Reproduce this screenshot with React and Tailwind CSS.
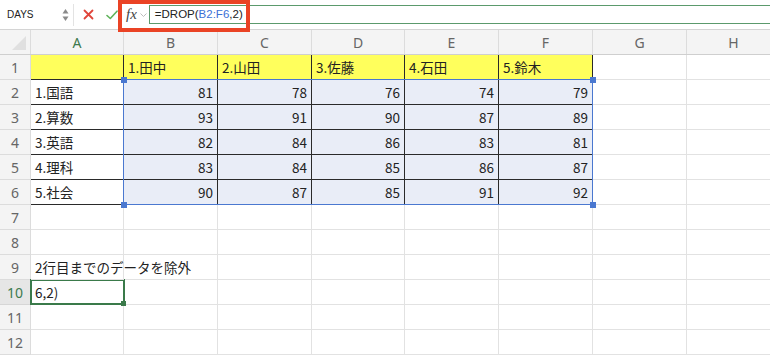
import React from "react";

const W = ["w-[93px]", "w-[94px]", "w-[94px]", "w-[93px]", "w-[94px]", "w-[94px]", "w-[94px]", "w-[94px]"];
const LETTERS = ["A", "B", "C", "D", "E", "F", "G", "H"];

const DATA = [
  ["", "1.田中", "2.山田", "3.佐藤", "4.石田", "5.鈴木"],
  ["1.国語", 81, 78, 76, 74, 79],
  ["2.算数", 93, 91, 90, 87, 89],
  ["3.英語", 82, 84, 86, 83, 81],
  ["4.理科", 83, 84, 85, 86, 87],
  ["5.社会", 90, 87, 85, 91, 92],
];

const font = { fontFamily: '"Noto Sans CJK JP", "Noto Sans", sans-serif' };

function Cell({ r, c }) {
  const inTable = r <= 6 && c <= 5;
  let content = null;
  let bg = "bg-white";
  let align = "justify-start pl-[4px]";
  if (inTable) {
    const v = DATA[r - 1][c];
    content = v;
    if (r === 1) bg = "bg-[#ffff5c]";
    else if (c >= 1) {
      bg = "bg-[#e9edf7]";
      align = "justify-end pr-[4px]";
    }
  }
  if (r === 9 && c === 0) content = "2行目までのデータを除外";
  if (r === 10 && c === 0) content = "6,2)";
  const border = inTable
    ? "border-r border-b border-[#2a2a2a]"
    : "border-r border-b border-[#e2e2e2]";
  return (
    <div
      className={`${W[c]} h-[25px] shrink-0 flex items-center ${align} ${bg} ${border} text-[13.5px] text-[#222] whitespace-nowrap ${r === 9 && c === 0 ? "overflow-visible relative z-10" : "overflow-hidden"}`}
    >
      {content}
    </div>
  );
}

export default function App() {
  return (
    <div className="w-[770px] h-[355px] overflow-hidden bg-white relative" style={font}>
      {/* formula bar */}
      <div className="h-[30px] flex items-center bg-white border-b border-[#d4d4d4] relative">
        <div className="w-[74px] h-[22px] flex items-center pl-[7px] pr-[4px] border-r border-[#e3e3e3]">
          <span className="text-[10px] text-[#222] flex-1" style={{ fontFamily: '"Liberation Sans", Arial, sans-serif' }}>DAYS</span>
          <svg width="7" height="14" viewBox="0 0 7 14">
            <path d="M3.5 1 L6.5 5.5 L0.5 5.5 Z" fill="#8a8a8a" />
            <path d="M3.5 13 L6.5 8.5 L0.5 8.5 Z" fill="#8a8a8a" />
          </svg>
        </div>
        <div className="w-[24px] flex justify-center ml-[2px]">
          <svg width="11" height="11" viewBox="0 0 11 11">
            <path d="M1.5 1.5 L9.5 9.5 M9.5 1.5 L1.5 9.5" stroke="#e0443a" strokeWidth="1.8" strokeLinecap="round" />
          </svg>
        </div>
        <div className="w-[24px] flex justify-center">
          <svg width="12" height="10" viewBox="0 0 12 10">
            <path d="M1 5.5 L4.3 8.5 L11 1.2" stroke="#5fb35a" strokeWidth="1.6" fill="none" strokeLinecap="round" strokeLinejoin="round" />
          </svg>
        </div>
        <span
          className="italic text-[15px] text-[#444] ml-[2px]"
          style={{ fontFamily: '"Liberation Serif", "DejaVu Serif", serif' }}
        >
          fx
        </span>
        <svg width="9" height="8" viewBox="0 0 9 8" className="ml-[2px]">
          <path d="M1.5 2.5 L4.5 5.5 L7.5 2.5" stroke="#bdbdbd" strokeWidth="1" fill="none" />
        </svg>
        <div className="flex-1 h-[19px] ml-[1px] border border-[#5b9a6c] border-r-0 flex items-center pl-[5px]">
          <span className="text-[11.5px] text-[#222]" style={{ fontFamily: '"Liberation Sans", Arial, sans-serif' }}>
            =DROP(<span className="text-[#3b6fd6]">B2:F6</span>,2)
          </span>
        </div>
        {/* red annotation box */}
        <div className="absolute left-[118px] top-0 w-[132px] h-[32px] border-[4px] border-[#ea4325] z-20" />
      </div>

      {/* column header */}
      <div className="flex h-[25px] bg-[#f4f4f4] border-b border-[#cfcfcf]">
        <div className="w-[31px] shrink-0 border-r border-[#dcdcdc] relative">
          <svg width="22" height="18" viewBox="0 0 22 18" className="absolute right-[2px] bottom-[2px]">
            <path d="M20 2 L20 16 L6 16 Z" fill="#e0e0e0" />
          </svg>
        </div>
        {LETTERS.map((l, i) => (
          <div
            key={l}
            className={`${W[i]} shrink-0 flex items-center justify-center border-r border-[#dcdcdc] text-[14px] ${i === 0 ? "text-[#3d7a4e]" : "text-[#666]"}`}
            style={{ fontFamily: '"Noto Sans", sans-serif' }}
          >
            {l}
          </div>
        ))}
      </div>

      {/* rows */}
      <div className="relative">
        {Array.from({ length: 12 }, (_, ri) => {
          const r = ri + 1;
          return (
            <div key={r} className="flex">
              <div
                className={`w-[31px] h-[25px] shrink-0 flex items-center justify-center border-r border-b text-[14px] ${r === 10 ? "bg-[#e6e6e6] text-[#3d7a4e] border-[#d6d6d6]" : "bg-[#f4f4f4] text-[#666] border-[#dcdcdc]"}`}
                style={{ fontFamily: '"Noto Sans", sans-serif' }}
              >
                {r}
              </div>
              {LETTERS.map((_, c) => (
                <Cell key={c} r={r} c={c} />
              ))}
            </div>
          );
        })}

        {/* selection B2:F6 */}
        <div className="absolute left-[123px] top-[24px] w-[470px] h-[126px] border-[1.5px] border-[#4a78d0] pointer-events-none">
          <div className="absolute -left-[3.5px] -top-[3.5px] w-[6px] h-[6px] bg-[#4a78d0]" />
          <div className="absolute -right-[3.5px] -top-[3.5px] w-[6px] h-[6px] bg-[#4a78d0]" />
          <div className="absolute -left-[3.5px] -bottom-[3.5px] w-[6px] h-[6px] bg-[#4a78d0]" />
          <div className="absolute -right-[3.5px] -bottom-[3.5px] w-[6px] h-[6px] bg-[#4a78d0]" />
        </div>

        {/* active cell A10 */}
        <div className="absolute left-[30px] top-[224px] w-[95px] h-[26px] border-2 border-[#3a7a4a] pointer-events-none">
          <div className="absolute -right-[3px] -bottom-[3px] w-[5px] h-[5px] bg-[#3a7a4a]" />
        </div>
      </div>
    </div>
  );
}
